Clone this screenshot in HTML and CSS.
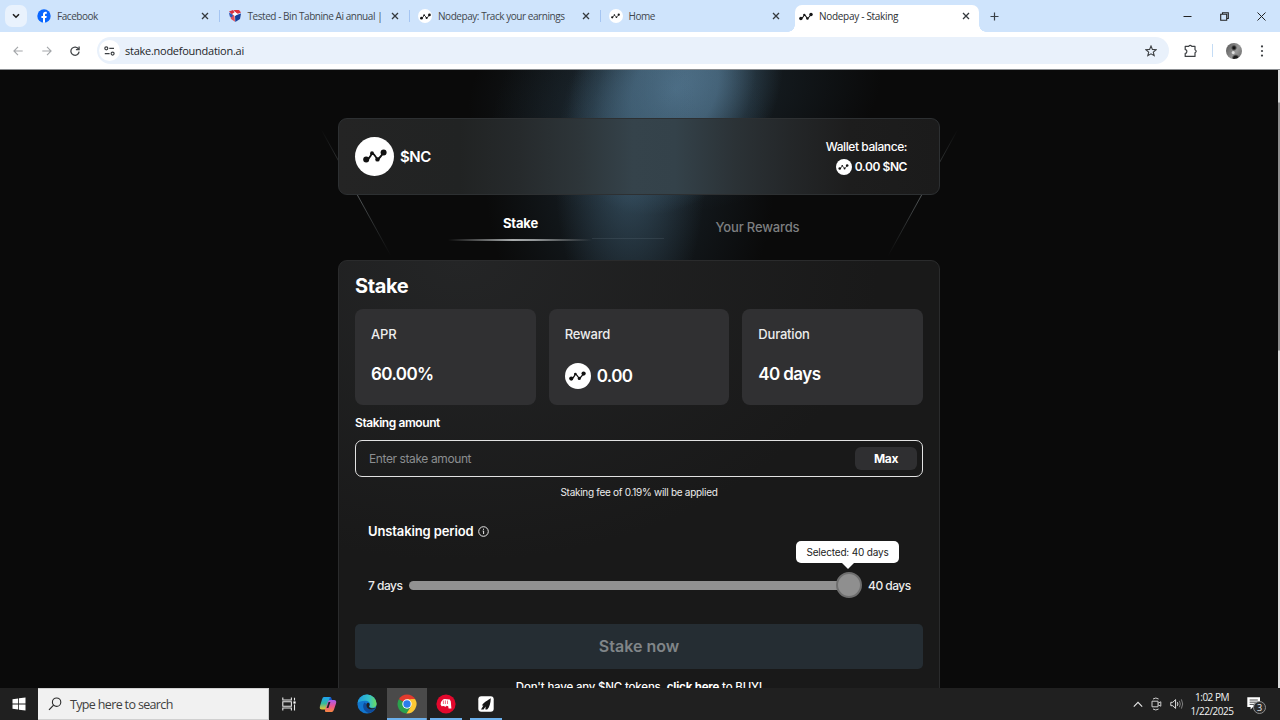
FILE: index.html
```html
<!DOCTYPE html>
<html lang="en">
<head>
    <meta charset="UTF-8">
    <title>Nodepay - Staking</title>
    <link rel="stylesheet" href="styles.css">
</head>
<body>
    <!-- Shared icons -->
    <svg class="defs" width="0" height="0">
        <symbol id="nodes" viewBox="0 0 24 14">
            <path d="M3 10.8 Q6.4 10.4 9 4.2 Q11 4.6 14.5 10.8 Q17 8.6 20.6 3.6" fill="none" stroke="currentColor" stroke-width="1.8" stroke-linejoin="round"/>
            <circle cx="3.2" cy="10.6" r="3" fill="currentColor"/>
            <circle cx="9" cy="4.2" r="1.9" fill="currentColor"/>
            <circle cx="14.5" cy="10.4" r="2.2" fill="currentColor"/>
            <circle cx="20.6" cy="3.6" r="3" fill="currentColor"/>
        </symbol>
        <symbol id="x" viewBox="0 0 8 8">
            <path d="M1 1 L7 7 M7 1 L1 7" fill="none" stroke="currentColor" stroke-width="1.3"/>
        </symbol>
    </svg>

    <!-- Tab strip -->
    <div class="tab-strip">
        <div class="tab-search">
            <svg width="8" height="6" viewBox="0 0 8 6"><path d="M1 1.2 L4 4.2 L7 1.2" fill="none" stroke="#1f1f1f" stroke-width="1.6"/></svg>
        </div>
        <div class="tab">
            <span class="favicon"><svg width="14" height="14" viewBox="0 0 14 14"><circle cx="7" cy="7" r="6.7" fill="#0866ff"/><path d="M6 13.7 V9 H4.4 V6.9 H6 V5.6 C6 3.6 7 2.8 8.5 2.8 C9.1 2.8 9.5 2.9 9.8 2.9 V4.7 H9 C8.2 4.7 8 5.1 8 5.8 V6.9 H9.7 L9.4 9 H8 V13.7 Z" fill="#fff"/></svg></span>
            <span class="tab-title">Facebook</span>
            <svg class="tab-close"><use href="#x"/></svg>
        </div>
        <div class="tab">
            <span class="favicon"><svg width="14" height="14" viewBox="0 0 14 14"><path d="M1 2.5 L5 1 L7 4 L4 5.5 Z" fill="#d9303e"/><path d="M5.5 1 L11 1 L13 3.5 L9 5 Z" fill="#e0323c"/><path d="M1.5 4.5 L6.3 6 L7 12.8 L3 10 Z" fill="#e2535c"/><path d="M13 4.5 L12 10 L7.3 13 L7 6.5 Z" fill="#18409b"/><path d="M4 5 L7 3 L10 5 L7 7 Z" fill="#fff"/><path d="M1 3.4 L5 6 L4 8.6 L1.8 7.6 Z" fill="#2b58bd"/></svg></span>
            <span class="tab-title">Tested - Bin Tabnine Ai annual |</span>
            <svg class="tab-close"><use href="#x"/></svg>
        </div>
        <div class="tab">
            <span class="favicon favicon-round"><svg width="11" height="7"><use href="#nodes"/></svg></span>
            <span class="tab-title">Nodepay: Track your earnings</span>
            <svg class="tab-close"><use href="#x"/></svg>
        </div>
        <div class="tab no-divider">
            <span class="favicon favicon-round"><svg width="9" height="6"><use href="#nodes"/></svg></span>
            <span class="tab-title">Home</span>
            <svg class="tab-close"><use href="#x"/></svg>
        </div>
        <div class="tab active">
            <span class="favicon"><svg width="14" height="9"><use href="#nodes"/></svg></span>
            <span class="tab-title">Nodepay - Staking</span>
            <svg class="tab-close"><use href="#x"/></svg>
        </div>
        <svg class="new-tab" width="9" height="9" viewBox="0 0 9 9"><path d="M4.5 0.5 V8.5 M0.5 4.5 H8.5" stroke="#3a4046" stroke-width="1.2"/></svg>
        <div class="window-controls">
            <svg width="9" height="9" viewBox="0 0 9 9"><path d="M0.5 4.5 H8.5" stroke="#222" stroke-width="1"/></svg>
            <svg width="9" height="9" viewBox="0 0 9 9"><path d="M0.7 2.3 H6.7 V8.3 H0.7 Z M2.5 2 V0.7 H8.3 V6.5 H7" fill="none" stroke="#222" stroke-width="1.1"/></svg>
            <svg width="9" height="9" viewBox="0 0 9 9"><path d="M0.5 0.5 L8.5 8.5 M8.5 0.5 L0.5 8.5" stroke="#222" stroke-width="1"/></svg>
        </div>
    </div>

    <!-- Address bar -->
    <div class="toolbar">
        <div class="nav-buttons">
            <svg width="10" height="10" viewBox="0 0 10 10"><path d="M9.7 5 H1 M5 0.8 L0.9 5 L5 9.2" fill="none" stroke="#a3a6a9" stroke-width="1.1"/></svg>
            <svg width="10" height="10" viewBox="0 0 10 10"><path d="M0.3 5 H9 M5 0.8 L9.1 5 L5 9.2" fill="none" stroke="#a3a6a9" stroke-width="1.1"/></svg>
            <svg width="10" height="10" viewBox="0 0 10 10"><path d="M8.6 3.2 A4.1 4.1 0 1 0 9.1 5.6 M9.1 0.4 V3.6 H5.9" fill="none" stroke="#44474a" stroke-width="1.3"/></svg>
        </div>
        <div class="omnibox">
            <span class="site-info">
                <svg width="11" height="10" viewBox="0 0 11 10"><circle cx="2.3" cy="2.3" r="1.5" fill="none" stroke="#3d4043" stroke-width="1.2"/><circle cx="8.6" cy="7.6" r="1.5" fill="none" stroke="#3d4043" stroke-width="1.2"/><path d="M5.3 2.3 H10 M0.8 7.6 H5.6" stroke="#3d4043" stroke-width="1.2"/></svg>
            </span>
            <span class="url">stake.nodefoundation.ai</span>
            <svg class="star" width="12" height="12" viewBox="0 0 12 12"><path d="M6 1 L7.4 4.4 L11.1 4.7 L8.3 7.1 L9.2 10.7 L6 8.8 L2.8 10.7 L3.7 7.1 L0.9 4.7 L4.6 4.4 Z" fill="none" stroke="#3d4043" stroke-width="1.1"/></svg>
        </div>
        <svg width="14" height="14" viewBox="0 0 14 14"><path d="M1.2 2.4 H4.6 Q6.2 0.4 7.8 2.4 H11 V5.8 Q13.4 7.3 11 8.8 V12.4 H1.2 V9.4 C3.4 9.4 3.4 5.6 1.2 5.6 Z" fill="none" stroke="#3d4043" stroke-width="1.2" stroke-linejoin="round"/></svg>
        <span class="toolbar-divider"></span>
        <span class="avatar"></span>
        <svg class="kebab" width="4" height="12" viewBox="0 0 4 12"><circle cx="2" cy="1.4" r="1.1"/><circle cx="2" cy="6" r="1.1"/><circle cx="2" cy="10.6" r="1.1"/></svg>
    </div>

    <!-- Staking page -->
    <main class="page">
        <div class="glow glow-top"></div>
        <div class="glow glow-beam"></div>
        <svg class="rays" width="640" height="130" viewBox="0 0 640 130">
            <defs>
                <linearGradient id="fade" x1="0" y1="0" x2="0" y2="1">
                    <stop offset="0" stop-color="#5a6163" stop-opacity="0"/>
                    <stop offset="0.5" stop-color="#6a7072" stop-opacity="0.8"/>
                    <stop offset="1" stop-color="#5a6163" stop-opacity="0"/>
                </linearGradient>
            </defs>
            <path d="M1 1 L71 128" stroke="url(#fade)"/>
            <path d="M638 1 L568 128" stroke="url(#fade)"/>
        </svg>

        <section class="wallet">
            <span class="coin coin-lg"><svg width="24" height="14"><use href="#nodes"/></svg></span>
            <span class="token">$NC</span>
            <div class="balance">
                <div class="balance-label">Wallet balance:</div>
                <div class="balance-value"><span class="coin coin-sm"><svg width="11" height="6"><use href="#nodes"/></svg></span>0.00 $NC</div>
            </div>
        </section>

        <nav class="page-tabs">
            <a class="page-tab selected">Stake</a>
            <a class="page-tab">Your Rewards</a>
        </nav>

        <section class="panel">
            <h1>Stake</h1>
            <div class="stats">
                <div class="stat">
                    <div class="stat-label">APR</div>
                    <div class="stat-value">60.00%</div>
                </div>
                <div class="stat">
                    <div class="stat-label">Reward</div>
                    <div class="stat-value with-coin"><span class="coin coin-md"><svg width="17" height="10"><use href="#nodes"/></svg></span>0.00</div>
                </div>
                <div class="stat">
                    <div class="stat-label">Duration</div>
                    <div class="stat-value">40 days</div>
                </div>
            </div>

            <div class="field-label">Staking amount</div>
            <div class="amount">
                <span class="placeholder">Enter stake amount</span>
                <span class="max">Max</span>
            </div>
            <div class="fee">Staking fee of 0.19% will be applied</div>

            <div class="period-label">Unstaking period
                <svg width="11" height="11" viewBox="0 0 11 11"><circle cx="5.5" cy="5.5" r="4.8" fill="none" stroke="#e6e6e6" stroke-width="1"/><path d="M4.7 5 H5.6 V8 M5.5 2.7 V3.8" fill="none" stroke="#e6e6e6" stroke-width="1"/></svg>
            </div>
            <div class="slider">
                <span class="slider-min">7 days</span>
                <div class="track">
                    <div class="thumb"></div>
                    <div class="tooltip">Selected: 40 days</div>
                </div>
                <span class="slider-max">40 days</span>
            </div>

            <div class="stake-btn">Stake now</div>
            <div class="buy">Don't have any $NC tokens, <b>click here</b> to BUY!</div>
        </section>

        <div class="scrollbar"></div>
    </main>

    <!-- Windows taskbar -->
    <footer class="taskbar">
        <div class="start">
            <svg width="14" height="14" viewBox="0 0 14 14"><path d="M0.5 2.2 L6.2 1.4 V6.6 H0.5 Z M7 1.3 L13.5 0.4 V6.6 H7 Z M0.5 7.4 H6.2 V12.6 L0.5 11.8 Z M7 7.4 H13.5 V13.6 L7 12.7 Z" fill="#fff"/></svg>
        </div>
        <div class="search">
            <svg width="14" height="14" viewBox="0 0 14 14"><circle cx="8.6" cy="5.2" r="4.2" fill="none" stroke="#2b2b2b" stroke-width="1.1"/><path d="M5.6 8.2 L1 12.9" stroke="#2b2b2b" stroke-width="1.2"/></svg>
            <span>Type here to search</span>
        </div>
        <div class="apps">
            <div class="app">
                <svg width="14" height="14" viewBox="0 0 14 14"><path d="M0.8 0.5 V3 H9.4 V0.5 M0.8 13.5 V11 H9.4 V13.5 M0.8 4.8 H9.4 V9.2 H0.8 Z M12.5 0.8 V3.5 M12.5 7.5 V13.5" fill="none" stroke="#e6e6e6" stroke-width="1.1"/><rect x="11.4" y="4.4" width="2.2" height="2.2" fill="#fff"/></svg>
            </div>
            <div class="app">
                <svg width="18" height="17" viewBox="0 0 18 17">
                    <defs>
                        <linearGradient id="cp1" x1="0" y1="0" x2="0" y2="1"><stop offset="0" stop-color="#1fa2f2"/><stop offset="0.5" stop-color="#31b9a0"/><stop offset="1" stop-color="#f0c52b"/></linearGradient>
                        <linearGradient id="cp2" x1="0" y1="0" x2="0" y2="1"><stop offset="0" stop-color="#a45cf0"/><stop offset="0.5" stop-color="#ec5495"/><stop offset="1" stop-color="#f7883c"/></linearGradient>
                    </defs>
                    <path d="M5 1 H11 Q12.5 1 12 3 L9 12 Q8.4 13.6 6.5 13.6 H3 Q0 13.6 1 10 L3 3.4 Q3.7 1 5 1 Z" fill="url(#cp1)"/>
                    <path d="M11 1 Q12.5 1 13 4 H10 Z" fill="#1657c9"/>
                    <path d="M13 16 H7 Q5.5 16 6 14 L9 5.6 Q9.6 4 11.5 4 H15 Q18 4 17 7.5 L15 13.6 Q14.3 16 13 16 Z" fill="url(#cp2)"/>
                    <path d="M9.6 6 L11.4 6 L9.4 12 L7.6 12 Z" fill="#202020"/>
                </svg>
            </div>
            <div class="app">
                <svg width="20" height="20" viewBox="0 0 20 20">
                    <defs>
                        <linearGradient id="edge1" x1="0" y1="0" x2="1" y2="0"><stop offset="0" stop-color="#1d9be0"/><stop offset="0.6" stop-color="#35c1c9"/><stop offset="1" stop-color="#6ddc5a"/></linearGradient>
                    </defs>
                    <circle cx="10" cy="10" r="9.6" fill="#1277cf"/>
                    <path d="M0.5 9 A9.6 9.6 0 0 1 19.6 9.4 C19.8 12.6 17 14 14.4 13.8 C12 13.6 12 12.6 12.8 11.5 C14 8.5 11 6.8 8 6.8 C4.5 6.8 1.6 8 0.5 9 Z" fill="url(#edge1)"/>
                    <path d="M7.6 8.6 C4.8 11 6 17.6 12 19 C15 18.8 17.6 16.6 18.6 14.6 C13 17 8.6 14 9.6 10 Z" fill="#0f4c9b"/>
                    <path d="M9.8 9.4 C8.4 12 10.6 15.6 14.8 15.4 C16.6 15.3 18.4 14.4 18.9 13.8 C16 14.6 12 14 12 12.4 C12 11.6 12.8 11.4 12.6 10 C11.8 8.6 10.6 8.6 9.8 9.4 Z" fill="#202020"/>
                </svg>
            </div>
            <div class="app open focused">
                <svg width="20" height="20" viewBox="0 0 20 20">
                    <path d="M10 10 L1.8 5.2 A9.5 9.5 0 0 1 18.2 5.2 Z" fill="#e33b2e"/>
                    <path d="M1.8 5.2 A9.5 9.5 0 0 0 9.4 19.5 L14.2 12.3 L10 10 Z" fill="#2ba24c"/>
                    <path d="M18.2 5.2 A9.5 9.5 0 0 1 9.4 19.5 L14.1 12.3 L14.1 5.2 Z" fill="#fcc934"/>
                    <path d="M10 5.2 H18.2 L14.2 12.3 Z" fill="#fcc934"/>
                    <circle cx="10" cy="10" r="4.7" fill="#fff"/>
                    <circle cx="10" cy="10" r="3.7" fill="#2a7de9"/>
                </svg>
            </div>
            <div class="app open">
                <svg width="20" height="20" viewBox="0 0 20 20"><circle cx="10" cy="10" r="9.6" fill="#e3082d"/><path d="M5 8 L7 5.4 L8.6 5 L13.8 5.6 L14.8 7.6 L15.4 14.6 H12.6 L12.2 12.2 L10.6 11.8 L9.8 12.8 L7.4 12 L5.6 12.2 L4.6 10.6 Z" fill="#fff"/><path d="M7.4 6.6 V10 M9.4 6.4 V10 M11.5 6.6 V10" stroke="#e3082d" stroke-width="0.6"/></svg>
            </div>
            <div class="app open">
                <svg width="16" height="16" viewBox="0 0 16 16"><rect x="0.3" y="0.3" width="15.4" height="15.4" rx="3" fill="#fff"/><path d="M12.8 2.2 C10 4.2 5 6.6 4 9.6 L5.4 9.4 L3 13.6 H5.6 L7.6 10.6 L7.4 13.6 H9.2 C11.6 11 12.6 7 12.8 2.2 Z" fill="#161616"/></svg>
            </div>
        </div>
        <div class="tray">
            <svg width="10" height="7" viewBox="0 0 10 7"><path d="M0.8 5.6 L5 1.4 L9.2 5.6" fill="none" stroke="#e8e8e8" stroke-width="1.1"/></svg>
            <svg width="11" height="14" viewBox="0 0 11 14"><path d="M1 4.2 H7 V9.8 H1 Z M7 6.2 L9.8 4.8 V9.2 L7 7.8 M2 2 Q4.8 0 7.6 2 M2 12 Q4.8 14 7.6 12" fill="none" stroke="#cfcfcf" stroke-width="1"/></svg>
            <svg width="14" height="12" viewBox="0 0 14 12"><path d="M0.8 4.3 H2.8 L5.6 1.6 V10.4 L2.8 7.7 H0.8 Z M7.4 4.2 Q8.4 6 7.4 7.8" fill="none" stroke="#e0e0e0" stroke-width="1"/><path d="M9.4 2.8 Q11.2 6 9.4 9.2 M11.4 1.4 Q14 6 11.4 10.6" fill="none" stroke="#8a8a8a" stroke-width="0.9"/></svg>
        </div>
        <div class="clock">
            <span>1:02 PM</span>
            <span>1/22/2025</span>
        </div>
        <div class="notify">
            <svg width="14" height="13" viewBox="0 0 14 13"><path d="M0.3 0.3 H13 V10 H6 L3.6 12.4 V10 H0.3 Z" fill="#fff"/><path d="M2.6 3 H10.8 M2.6 5.2 H10.8 M2.6 7.4 H8" stroke="#202020" stroke-width="0.8"/></svg>
            <span class="badge">3</span>
        </div>
    </footer>
</body>
</html>
```
FILE: styles.css
```css
* {
    box-sizing: border-box;
    margin: 0;
    padding: 0;
}

body {
    width: 1280px;
    height: 720px;
    overflow: hidden;
    display: flex;
    flex-direction: column;
    font-family: 'Open Sans', 'Noto Sans', sans-serif;
    background-color: #0a0a0a;
}

svg {
    display: block;
    flex: none;
}

.defs {
    position: absolute;
}

/* Tab strip */
.tab-strip {
    height: 32px;
    flex: none;
    display: flex;
    align-items: center;
    background-color: #cfe4fc;
    padding-left: 5px;
}

.tab-search {
    width: 22px;
    height: 22px;
    margin-right: 2px;
    border-radius: 7px;
    background-color: #e9f2fd;
    display: flex;
    align-items: center;
    justify-content: center;
}

.tab {
    width: 190.5px;
    height: 32px;
    flex: none;
    display: flex;
    align-items: center;
    padding: 0 11px 0 8px;
    position: relative;
    color: #42474d;
}

.tab:not(.no-divider):not(.active)::after {
    content: "";
    position: absolute;
    right: 0;
    top: 10px;
    width: 1px;
    height: 12px;
    background-color: #a5c5f2;
}

.favicon {
    width: 14px;
    height: 14px;
    margin-right: 6px;
    display: flex;
    align-items: center;
    justify-content: center;
    color: #161616;
}

.favicon-round {
    background-color: #fff;
    border-radius: 50%;
}

.tab-title {
    flex: 1;
    font-size: 10px;
    line-height: 14px;
    letter-spacing: -0.45px;
    white-space: nowrap;
}

.tab-close {
    width: 8px;
    height: 8px;
    color: #33383d;
}

.tab.active {
    width: 184px;
    height: 27px;
    margin: 5px 6px 0 4px;
    padding: 0 9px 5px 4px;
    background-color: #fff;
    border-radius: 7px 7px 0 0;
    color: #2c2f33;
}

.tab.active .tab-title {
    letter-spacing: -0.3px;
}

.tab.active::before,
.tab.active::after {
    content: "";
    position: absolute;
    bottom: 0;
    width: 7px;
    height: 7px;
}

.tab.active::before {
    left: -7px;
    background: radial-gradient(circle at 0 0, transparent 6.5px, #fff 7px);
}

.tab.active::after {
    right: -7px;
    background: radial-gradient(circle at 100% 0, transparent 6.5px, #fff 7px);
}

.new-tab {
    margin-left: 5px;
}

.window-controls {
    margin-left: auto;
    margin-right: 14px;
    display: flex;
    gap: 28px;
}

/* Address bar */
.toolbar {
    height: 38px;
    flex: none;
    display: flex;
    align-items: center;
    background-color: #fff;
    border-bottom: 1px solid #8c8f92;
    padding: 0 16px 0 13px;
}

.nav-buttons {
    display: flex;
    gap: 18.5px;
    margin-right: 17px;
}

.omnibox {
    width: 1072px;
    height: 27px;
    border-radius: 14px;
    background-color: #e9f1fb;
    display: flex;
    align-items: center;
    padding: 0 12px 0 2px;
    margin-right: 15px;
}

.site-info {
    width: 21px;
    height: 21px;
    border-radius: 50%;
    background-color: #fff;
    display: flex;
    align-items: center;
    justify-content: center;
    margin-right: 5px;
}

.url {
    font-size: 11px;
    letter-spacing: -0.26px;
    color: #24272a;
}

.star {
    margin-left: auto;
}

.toolbar-divider {
    width: 1px;
    height: 13px;
    margin: 0 13px 0 14px;
    background-color: #c4dcf5;
}

.avatar {
    width: 16px;
    height: 16px;
    border-radius: 50%;
    background: radial-gradient(circle at 50% 30%, #111 1px, transparent 3px),
        radial-gradient(circle at 45% 60%, #ddd 1px, transparent 2px),
        radial-gradient(circle at 60% 95%, #1a1a1a 2px, transparent 4px),
        linear-gradient(120deg, #555, #999 60%, #666);
}

.kebab {
    margin-left: auto;
    fill: #3d4043;
}

/* Page */
.page {
    height: 618px;
    flex: none;
    overflow: hidden;
    position: relative;
    display: flex;
    flex-direction: column;
    align-items: center;
    padding: 48px 2px 0 0;
    background-color: #0a0a0a;
    color: #fff;
    font-family: Inter, sans-serif;
}

.glow {
    position: absolute;
}

/* bright spot under the toolbar */
.glow-top {
    left: 460px;
    top: -110px;
    width: 430px;
    height: 260px;
    transform: skewX(-12deg);
    background: radial-gradient(ellipse 105px 125px at 50% 50%, #567a94, rgba(80, 115, 140, 0.85) 40%, rgba(60, 90, 110, 0.35) 75%, transparent 100%),
        radial-gradient(ellipse 205px 125px at 50% 50%, rgba(50, 76, 94, 0.45), transparent);
}

/* beam falling down behind the cards */
.glow-beam {
    left: 480px;
    top: 0;
    width: 300px;
    height: 230px;
    background: radial-gradient(ellipse 75px 160px at 50% 45%, rgba(66, 98, 120, 0.6), transparent),
        radial-gradient(ellipse 145px 200px at 50% 45%, rgba(45, 68, 84, 0.45), transparent);
}

.rays {
    position: absolute;
    left: 320px;
    top: 58px;
    fill: none;
}

.wallet {
    width: 602px;
    height: 77px;
    flex: none;
    position: relative;
    display: flex;
    align-items: center;
    padding: 0 32px 1px 16px;
    border: 1px solid #2d3032;
    border-radius: 9px;
    background: linear-gradient(to right, #242424, #212323 20%, #262a2c 30%, #2d3539 40%, #35434b 49%, #34424a 56%, #2b3236 66%, #242729 75%, #1d1d1d 85%, #1b1b1b);
}

.coin {
    flex: none;
    border-radius: 50%;
    background-color: #fff;
    color: #111;
    display: flex;
    align-items: center;
    justify-content: center;
}

.coin-lg {
    width: 39px;
    height: 39px;
}

.coin-md {
    width: 26px;
    height: 26px;
}

.coin-sm {
    width: 16px;
    height: 16px;
}

.token {
    margin-left: 6px;
    font-size: 15px;
    font-weight: 600;
    letter-spacing: -0.5px;
}

.balance {
    margin-left: auto;
    font-size: 12px;
    text-align: right;
    letter-spacing: -0.42px;
}

.balance-label {
    font-weight: 500;
    line-height: 21px;
}

.balance-value {
    display: flex;
    align-items: center;
    justify-content: flex-end;
    gap: 3px;
    font-weight: 600;
    line-height: 20px;
}

.page-tabs {
    width: 474px;
    height: 65px;
    flex: none;
    position: relative;
    display: flex;
}

.page-tabs::after {
    content: "";
    position: absolute;
    left: 190px;
    top: 43px;
    width: 72px;
    height: 1px;
    background-color: rgba(120, 140, 150, 0.18);
}

.page-tab {
    flex: 1;
    padding-top: 23px;
    font-size: 13px;
    font-weight: 500;
    line-height: 18px;
    letter-spacing: -0.15px;
    text-align: center;
    color: #7d7f80;
}

.page-tab.selected {
    padding-top: 19px;
    font-weight: 700;
    color: #fff;
    position: relative;
}

.page-tab.selected::after {
    content: "";
    position: absolute;
    left: 46px;
    top: 44px;
    width: 144px;
    height: 2px;
    background: linear-gradient(to right, transparent, #a9acad 45%, #94989a 60%, transparent);
}

.panel {
    width: 602px;
    height: 480px;
    flex: none;
    position: relative;
    padding: 13px 16px 0;
    border: 1px solid #2a2b2c;
    border-radius: 9px 9px 0 0;
    background: radial-gradient(ellipse 420px 300px at 20% 0, #242526, #191919);
}

h1 {
    font-size: 20px;
    font-weight: 700;
    line-height: 24px;
    letter-spacing: -0.4px;
    margin-bottom: 11px;
}

.stats {
    display: grid;
    grid-template-columns: repeat(3, 1fr);
    gap: 13px;
}

.stat {
    height: 96px;
    padding: 15px 16px;
    border-radius: 8px;
    background-color: #303032;
}

.stat-label {
    font-size: 13px;
    font-weight: 500;
    line-height: 20px;
    letter-spacing: -0.2px;
    color: #ececec;
}

.stat-value {
    margin-top: 18px;
    font-size: 17px;
    font-weight: 600;
    line-height: 24px;
    letter-spacing: -0.6px;
}

.stat-value.with-coin {
    display: flex;
    align-items: center;
    gap: 6px;
    margin-top: 19px;
    line-height: 26px;
}

.field-label {
    margin-top: 9px;
    font-size: 12px;
    font-weight: 600;
    line-height: 18px;
    letter-spacing: -0.42px;
}

.amount {
    height: 37px;
    margin-top: 8px;
    display: flex;
    align-items: center;
    justify-content: space-between;
    padding: 0 5px 0 13px;
    border: 1px solid #e2e2e2;
    border-radius: 7px;
    font-size: 12px;
}

.placeholder {
    letter-spacing: -0.4px;
    color: #8b8e90;
}

.max {
    width: 62px;
    height: 23px;
    border-radius: 6px;
    background-color: #2f2f31;
    font-weight: 700;
    line-height: 23px;
    letter-spacing: -0.3px;
    text-align: center;
}

.fee {
    margin-top: 7px;
    font-size: 10px;
    line-height: 16px;
    letter-spacing: -0.28px;
    text-align: center;
    color: #ececec;
}

.period-label {
    display: flex;
    align-items: center;
    gap: 4px;
    margin: 21px 0 0 13px;
    font-size: 13px;
    font-weight: 600;
    line-height: 20px;
    letter-spacing: -0.12px;
}

.slider {
    display: flex;
    align-items: center;
    margin: 34px 10px 0 13px;
    height: 20px;
    font-size: 12px;
    font-weight: 500;
    letter-spacing: -0.5px;
    color: #ececec;
}

.track {
    width: 440px;
    flex: none;
    height: 9px;
    margin: 0 19px 0 6px;
    border-radius: 5px;
    background-color: #919191;
    position: relative;
}

.slider-min {
    width: 35px;
    flex: none;
}

.slider-min,
.slider-max {
    white-space: nowrap;
}

.thumb {
    position: absolute;
    right: -13px;
    top: -8.5px;
    width: 26px;
    height: 26px;
    border: 2px solid #6e6e6e;
    border-radius: 50%;
    background-color: #8f8f8f;
}

.tooltip {
    position: absolute;
    left: 387px;
    top: -40px;
    width: 103px;
    height: 22px;
    border-radius: 5px;
    background-color: #fff;
    color: #1c1c1c;
    font-size: 10px;
    font-weight: 400;
    line-height: 22px;
    letter-spacing: -0.18px;
    text-align: center;
}

.tooltip::after {
    content: "";
    position: absolute;
    left: 46px;
    top: 22px;
    border: 6px solid transparent;
    border-top-color: #fff;
    border-bottom: 0;
}

.stake-btn {
    height: 45px;
    margin-top: 29px;
    border-radius: 5px;
    background-color: #252d33;
    color: #808588;
    font-size: 16px;
    font-weight: 600;
    line-height: 45px;
    text-align: center;
}

.buy {
    margin-top: 9px;
    font-size: 11.5px;
    font-weight: 500;
    line-height: 18px;
    letter-spacing: -0.19px;
    text-align: center;
}

.scrollbar {
    position: absolute;
    right: 0;
    top: 0;
    width: 2px;
    height: 100%;
    background: linear-gradient(#dcdcdc 32px, #8f8f8f 33px, #8f8f8f 280px, #dcdcdc 281px);
}

/* Taskbar */
.taskbar {
    height: 32px;
    flex: none;
    position: relative;
    display: flex;
    align-items: center;
    background-color: #202020;
    color: #f2f2f2;
}

.start {
    width: 38px;
    display: flex;
    justify-content: center;
}

.search {
    width: 231px;
    height: 32px;
    display: flex;
    align-items: center;
    gap: 8px;
    padding-left: 10px;
    background-color: #f1f1f1;
    border: 1px solid #d0d0d0;
    border-width: 1px 1px 1px 0;
    color: #3f3f3f;
    font-size: 12.5px;
    letter-spacing: -0.65px;
}

.apps {
    display: flex;
}

.app {
    width: 39.4px;
    height: 32px;
    display: flex;
    align-items: center;
    justify-content: center;
}

.app.open {
    background: linear-gradient(#6cb0ec, #6cb0ec) center bottom / 32px 2px no-repeat;
}

.app.open.focused {
    background: linear-gradient(#6cb0ec, #6cb0ec) center bottom / 100% 2px no-repeat #4a4a4a;
}

.tray {
    margin-left: auto;
    display: flex;
    align-items: center;
    gap: 8px;
}

.clock {
    width: 44px;
    margin-left: 6px;
    display: flex;
    flex-direction: column;
    align-items: center;
    font-size: 10px;
    line-height: 14px;
    letter-spacing: -0.5px;
}

.notify {
    width: 20px;
    height: 20px;
    margin: 0 13px 0 13px;
    position: relative;
    padding-top: 3px;
}

.badge {
    position: absolute;
    left: 6px;
    top: 7px;
    width: 13px;
    height: 13px;
    border: 1px solid #8f8f8f;
    border-radius: 50%;
    background-color: #2c2c2c;
    font-size: 9px;
    line-height: 11px;
    text-align: center;
}
```
